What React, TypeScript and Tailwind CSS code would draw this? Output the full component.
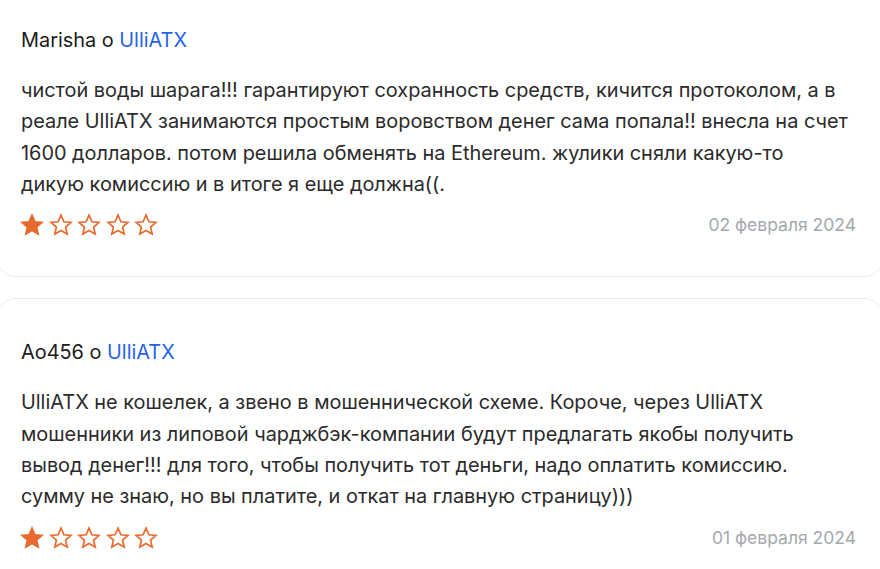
const reviews = [
  {
    author: "Marisha",
    text: "чистой воды шарага!!! гарантируют сохранность средств, кичится протоколом, а в реале UlliATX занимаются простым воровством денег сама попала!! внесла на счет 1600 долларов. потом решила обменять на Ethereum. жулики сняли какую-то дикую комиссию и в итоге я еще должна((.",
    rating: 1,
    date: "02 февраля 2024",
  },
  {
    author: "Ao456",
    text: "UlliATX не кошелек, а звено в мошеннической схеме. Короче, через UlliATX мошенники из липовой чарджбэк-компании будут предлагать якобы получить вывод денег!!! для того, чтобы получить тот деньги, надо оплатить комиссию. сумму не знаю, но вы платите, и откат на главную страницу)))",
    rating: 1,
    date: "01 февраля 2024",
  },
];

const Star = ({ filled }: { filled: boolean }) => (
  <svg width="24" height="24" viewBox="0 0 24 24" className="shrink-0">
    <path
      d="M12 2.2l2.9 6.6 7.1.6-5.4 4.7 1.6 7-6.2-3.7-6.2 3.7 1.6-7L2 9.4l7.1-.6z"
      fill={filled ? "#e96a2e" : "none"}
      stroke="#e96a2e"
      strokeWidth="1.7"
      strokeLinejoin="miter"
    />
  </svg>
);

const ReviewCard = ({ review }: { review: (typeof reviews)[number] }) => (
  <div className="border border-[#ececef] rounded-[22px] bg-white pl-[25px] pr-[25px] pt-[40px] pb-[38px]">
    <div className="text-[19.9px] leading-[27px] text-[#1c1c1c]">
      {review.author} о <span className="text-[#2563eb]">UlliATX</span>
    </div>
    <p className="mt-[21px] pr-[8px] text-[19.9px] leading-[31.3px] text-[#2b2b2b]">{review.text}</p>
    <div className="flex items-center justify-between mt-[12px]">
      <div className="flex items-center gap-[4.5px] -ml-[1px]">
        {[1, 2, 3, 4, 5].map((i) => (
          <Star key={i} filled={i <= review.rating} />
        ))}
      </div>
      <span className="text-[17.5px] text-[#a5a8ae] pr-[3px]">{review.date}</span>
    </div>
  </div>
);

export default function App() {
  return (
    <div className="w-[880px] h-[569px] overflow-hidden bg-white" style={{ fontFamily: "Inter, 'Noto Sans', sans-serif" }}>
      <div className="-mx-[5px] -mt-[14px] flex flex-col gap-[21px]">
        {reviews.map((r) => (
          <ReviewCard key={r.date} review={r} />
        ))}
      </div>
    </div>
  );
}
